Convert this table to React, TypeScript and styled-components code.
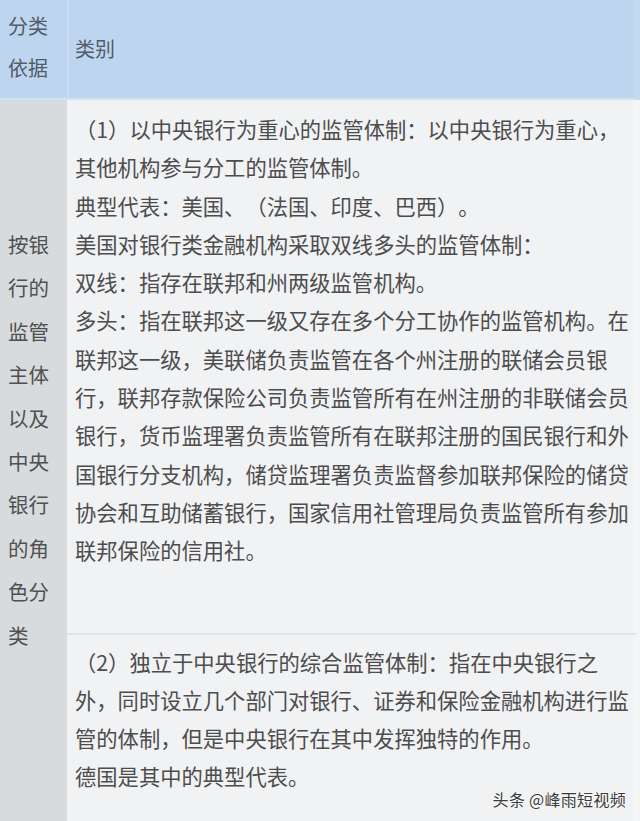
import React from 'react';
import styled, { createGlobalStyle } from 'styled-components';

const GlobalStyle = createGlobalStyle`
  html, body {
    margin: 0;
    padding: 0;
    background: #f1f2f4;
  }
  body {
    font-family: "Noto Sans CJK SC", "Noto Sans", sans-serif;
    color: #4a4a4a;
    text-spacing-trim: space-all;
  }
`;

const Table = styled.div`
  position: relative;
  width: 640px;
  height: 821px;
  overflow: hidden;
  display: grid;
  grid-template-columns: 67px 1fr;
  grid-template-rows: 100px auto 1fr;
`;

const HeadCell = styled.div<{ $wide?: boolean }>`
  background: #bdd5ef;
  border-bottom: 2px solid #d3e2f2;
  border-left: ${(p) => (p.$wide ? '2px solid #cadcf1' : 'none')};
  border-right: ${(p) => (p.$wide ? '7px solid #c3d9f1' : 'none')};
  box-sizing: border-box;
  display: flex;
  align-items: center;
  padding-left: ${(p) => (p.$wide ? '6px' : '8px')};
  font-size: 20px;
  line-height: 42px;
  color: #525b66;
`;

const HeadLabel = styled.div`
  width: 42px;
  padding-bottom: 4px;
`;

const SideCell = styled.div`
  grid-row: 2 / 4;
  background: #d8dbde;
  padding: 123px 0 0 8px;
  font-size: 20.5px;
  line-height: 43.4px;
  color: #505050;
`;

const SideText = styled.div`
  width: 44px;
`;

const BodyCell = styled.div<{ $first?: boolean }>`
  background: #f1f2f4;
  padding: ${(p) => (p.$first ? '10px 0 63px 8px' : '8px 0 0 8px')};
  border-top: ${(p) => (p.$first ? 'none' : '2px solid #e0e2e5')};
  border-right: 7px solid #f4f5f7;
  font-size: 21.3px;
  line-height: 38.3px;
  color: #4d4d4d;
`;

const Para = styled.p`
  margin: 0;
`;

const Watermark = styled.div`
  position: absolute;
  right: 14px;
  bottom: 12px;
  font-size: 16px;
  line-height: 20px;
  color: #3a3a3a;
  text-shadow: 0 0 2px #ffffff, 0 0 2px #ffffff;
  letter-spacing: 0.3px;
`;

const App: React.FC = () => {
  return (
    <>
      <GlobalStyle />
      <Table>
        <HeadCell>
          <HeadLabel>分类依据</HeadLabel>
        </HeadCell>
        <HeadCell $wide>类别</HeadCell>

        <SideCell>
          <SideText>按银行的监管主体以及中央银行的角色分类</SideText>
        </SideCell>

        <BodyCell $first>
          <Para>（1）以中央银行为重心的监管体制：以中央银行为重心，其他机构参与分工的监管体制。</Para>
          <Para>典型代表：美国、（法国、印度、巴西）。</Para>
          <Para>美国对银行类金融机构采取双线多头的监管体制：</Para>
          <Para>双线：指存在联邦和州两级监管机构。</Para>
          <Para>
            多头：指在联邦这一级又存在多个分工协作的监管机构。在联邦这一级，美联储负责监管在各个州注册的联储会员银行，联邦存款保险公司负责监管所有在州注册的非联储会员银行，货币监理署负责监管所有在联邦注册的国民银行和外国银行分支机构，储贷监理署负责监督参加联邦保险的储贷协会和互助储蓄银行，国家信用社管理局负责监管所有参加联邦保险的信用社。
          </Para>
        </BodyCell>

        <BodyCell>
          <Para>（2）独立于中央银行的综合监管体制：指在中央银行之外，同时设立几个部门对银行、证券和保险金融机构进行监管的体制，但是中央银行在其中发挥独特的作用。</Para>
          <Para>德国是其中的典型代表。</Para>
        </BodyCell>

        <Watermark>头条 @峰雨短视频</Watermark>
      </Table>
    </>
  );
};

export default App;
